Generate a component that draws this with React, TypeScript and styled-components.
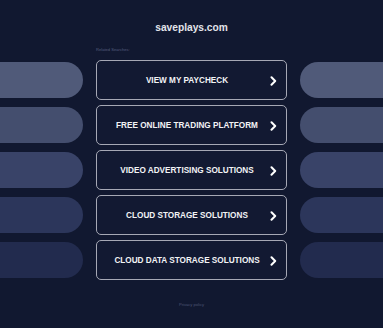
import React from "react";
import styled, { createGlobalStyle } from "styled-components";

const Global = createGlobalStyle`
  html, body {
    margin: 0;
    padding: 0;
    background: #111830;
  }
  body {
    font-family: "Liberation Sans", Arial, sans-serif;
  }
`;

const Page = styled.div`
  width: 383px;
  height: 328px;
  overflow: hidden;
  display: flex;
  flex-direction: column;
  align-items: stretch;
  background: #111830;
`;

const Title = styled.h1`
  margin: 0;
  padding-top: 21px;
  height: 14px;
  line-height: 14px;
  text-align: center;
  font-size: 10.2px;
  font-weight: 700;
  color: #e2e4ea;
`;

const Related = styled.div`
  margin: 12px 0 0 96px;
  height: 6px;
  line-height: 6px;
  font-size: 4.1px;
  color: #555d7d;
`;

const List = styled.div`
  margin-top: 7px;
  display: flex;
  flex-direction: column;
  gap: 5px;
`;

const Row = styled.div`
  display: grid;
  grid-template-columns: 83px 191px 83px;
  column-gap: 13px;
  align-items: center;
  height: 40px;
`;

const Pill = styled.div<{ $color: string; $side: "left" | "right" }>`
  height: 36px;
  background: ${(p) => p.$color};
  border-radius: ${(p) => (p.$side === "left" ? "0 18px 18px 0" : "18px 0 0 18px")};
`;

const Button = styled.a`
  box-sizing: border-box;
  height: 40px;
  display: flex;
  align-items: center;
  padding: 1px 7px 0 10px;
  border: 1.6px solid #a6a8b5;
  border-radius: 5px;
  background: #121932;
  text-decoration: none;
  cursor: pointer;
`;

const Label = styled.span`
  flex: 1;
  text-align: center;
  font-size: 8.2px;
  font-weight: 700;
  color: #f2f3f6;
  white-space: nowrap;
`;

const Chevron = styled.span`
  width: 12px;
  display: flex;
  justify-content: center;
  align-items: center;
`;

const Footer = styled.div`
  margin-top: 22px;
  text-align: center;
  font-size: 4.1px;
  line-height: 6px;
  color: #4d5574;
`;

const items = [
  { label: "VIEW MY PAYCHECK", color: "#505a79" },
  { label: "FREE ONLINE TRADING PLATFORM", color: "#444e6e" },
  { label: "VIDEO ADVERTISING SOLUTIONS", color: "#394368" },
  { label: "CLOUD STORAGE SOLUTIONS", color: "#2c365b" },
  { label: "CLOUD DATA STORAGE SOLUTIONS", color: "#222b4e" },
];

export default function App() {
  return (
    <Page>
      <Global />
      <Title>saveplays.com</Title>
      <Related>Related Searches:</Related>
      <List>
        {items.map((it) => (
          <Row key={it.label}>
            <Pill $color={it.color} $side="left" />
            <Button>
              <Label>{it.label}</Label>
              <Chevron>
                <svg width="7" height="10" viewBox="0 0 7 10">
                  <path d="M1.5 1.2 L5.2 5 L1.5 8.8" fill="none" stroke="#ffffff" strokeWidth="2" strokeLinecap="round" strokeLinejoin="round" />
                </svg>
              </Chevron>
            </Button>
            <Pill $color={it.color} $side="right" />
          </Row>
        ))}
      </List>
      <Footer>Privacy policy</Footer>
    </Page>
  );
}
